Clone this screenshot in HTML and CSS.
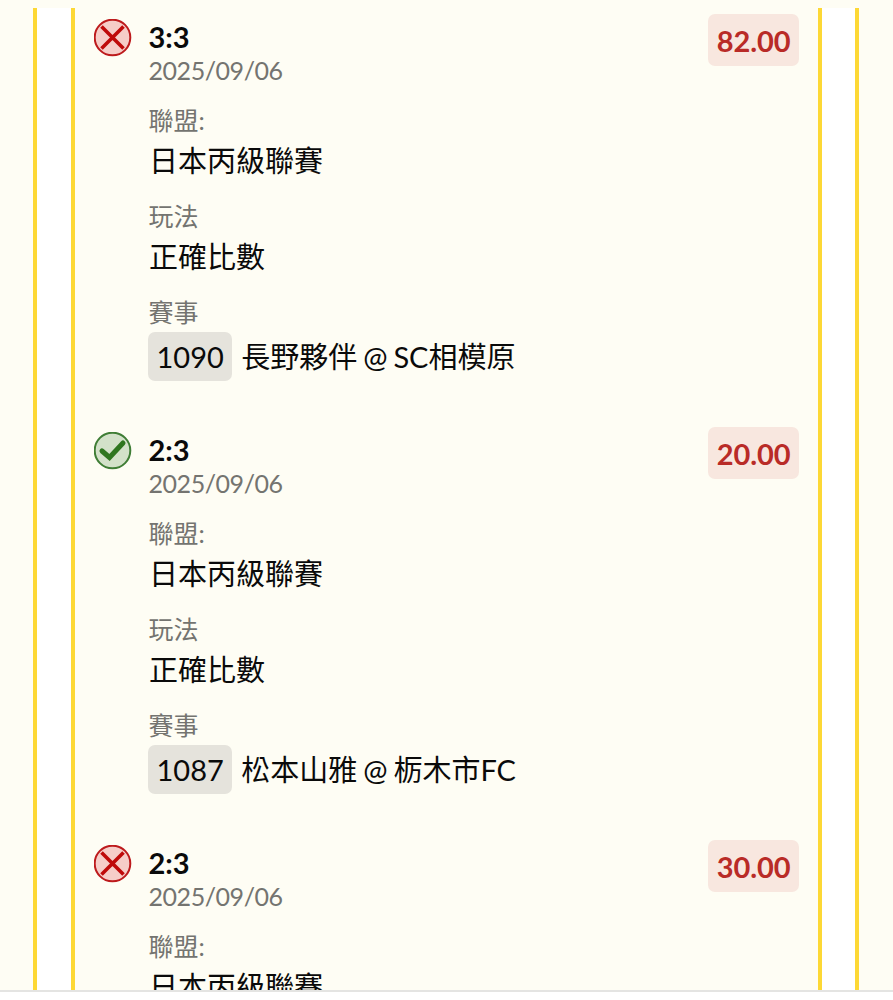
FILE: index.html
```
<!DOCTYPE html>
<html lang="zh-Hant">
<head>
  <meta charset="UTF-8">
  <meta name="viewport" content="width=device-width, initial-scale=1.0">
  <title>投注記錄</title>
  <link rel="stylesheet" href="styles.css">
</head>
<body>

  <div class="viewport">
    <div class="panel">
      <div class="bet-list">

        <div class="bet">
          <svg class="bet-icon" viewBox="0 0 38 38">
            <circle cx="18.5" cy="18.5" r="17.8" fill="#f6cdc8" stroke="#bd1a1c" stroke-width="2"/>
            <path d="M7.5 7.5 L29.5 29.5 M29.5 7.5 L7.5 29.5" fill="none" stroke="#bf0a0a" stroke-width="3.6"/>
          </svg>
          <div class="bet-info">
            <div class="bet-pick">3:3</div>
            <div class="bet-date">2025/09/06</div>
            <div class="label">聯盟:</div>
            <div class="value">日本丙級聯賽</div>
            <div class="label">玩法</div>
            <div class="value">正確比數</div>
            <div class="label">賽事</div>
            <div class="match"><span class="match-no">1090</span><span>長野夥伴 @ SC相模原</span></div>
          </div>
          <div class="odds">82.00</div>
        </div>

        <div class="bet">
          <svg class="bet-icon" viewBox="0 0 38 38">
            <circle cx="18.5" cy="18.5" r="17.8" fill="#d3e1c9" stroke="#3f7d35" stroke-width="2"/>
            <path d="M8 19 L15.5 25.5 L29 11" fill="none" stroke="#2f761f" stroke-width="5" stroke-linecap="round"/>
          </svg>
          <div class="bet-info">
            <div class="bet-pick">2:3</div>
            <div class="bet-date">2025/09/06</div>
            <div class="label">聯盟:</div>
            <div class="value">日本丙級聯賽</div>
            <div class="label">玩法</div>
            <div class="value">正確比數</div>
            <div class="label">賽事</div>
            <div class="match"><span class="match-no">1087</span><span>松本山雅 @ 栃木市FC</span></div>
          </div>
          <div class="odds">20.00</div>
        </div>

        <div class="bet">
          <svg class="bet-icon" viewBox="0 0 38 38">
            <circle cx="18.5" cy="18.5" r="17.8" fill="#f6cdc8" stroke="#bd1a1c" stroke-width="2"/>
            <path d="M7.5 7.5 L29.5 29.5 M29.5 7.5 L7.5 29.5" fill="none" stroke="#bf0a0a" stroke-width="3.6"/>
          </svg>
          <div class="bet-info">
            <div class="bet-pick">2:3</div>
            <div class="bet-date">2025/09/06</div>
            <div class="label">聯盟:</div>
            <div class="value">日本丙級聯賽</div>
          </div>
          <div class="odds">30.00</div>
        </div>

      </div>
    </div>
  </div>

</body>
</html>
```
FILE: styles.css
```
* {
  box-sizing: border-box;
}

body {
  margin: 0;
  height: 1000px;
  overflow: hidden;
  background-color: #fff;
  font-family: Lato, "Noto Sans CJK TC", sans-serif;
  font-size: 29px;
  color: #0a0a0a;
}

.viewport {
  height: 992px;
  padding: 8px 34px 0 33px;
  overflow: hidden;
  background-color: #fefdf4;
  border-bottom: 2px solid #e4e4e2;
}

.panel {
  height: 982px;
  padding: 0 33px 0 34px;
  background-color: #fff;
  border-left: 4px solid #fdd835;
  border-right: 4px solid #fdd835;
}

.bet-list {
  height: 982px;
  padding: 6px 19px 0;
  overflow: hidden;
  background-color: #fefdf4;
  border-left: 4px solid #fdd835;
  border-right: 4px solid #fdd835;
}

.bet {
  display: flex;
  align-items: flex-start;
  margin-bottom: 46px;
}

.bet-icon {
  width: 38px;
  height: 38px;
  margin-top: 5px;
  flex-shrink: 0;
}

.bet-info {
  flex: 1;
  margin-left: 16px;
  padding-top: 6px;
}

.bet-pick {
  padding-left: 0.5px;
  font-weight: 700;
  line-height: 33px;
}

.bet-date {
  margin-bottom: 13px;
  padding-left: 0.5px;
  font-size: 25px;
  letter-spacing: -0.45px;
  line-height: 35px;
  color: #747470;
}

.label {
  margin-top: -1px;
  padding-left: 0.5px;
  font-size: 25px;
  line-height: 40px;
  color: #747470;
}

.value {
  margin-bottom: 15px;
  padding-left: 1px;
  line-height: 42px;
}

.match {
  display: flex;
  align-items: center;
  line-height: 49px;
  word-spacing: -1.5px;
  white-space: nowrap;
}

.match-no {
  margin-right: 9px;
  padding: 0 8.5px;
  border-radius: 7px;
  background-color: #e5e3dc;
}

.odds {
  padding: 1px 8.5px 0;
  border-radius: 7px;
  background-color: #f8e7df;
  color: #b92b27;
  font-weight: 700;
  letter-spacing: -0.1px;
  line-height: 51px;
}
```
